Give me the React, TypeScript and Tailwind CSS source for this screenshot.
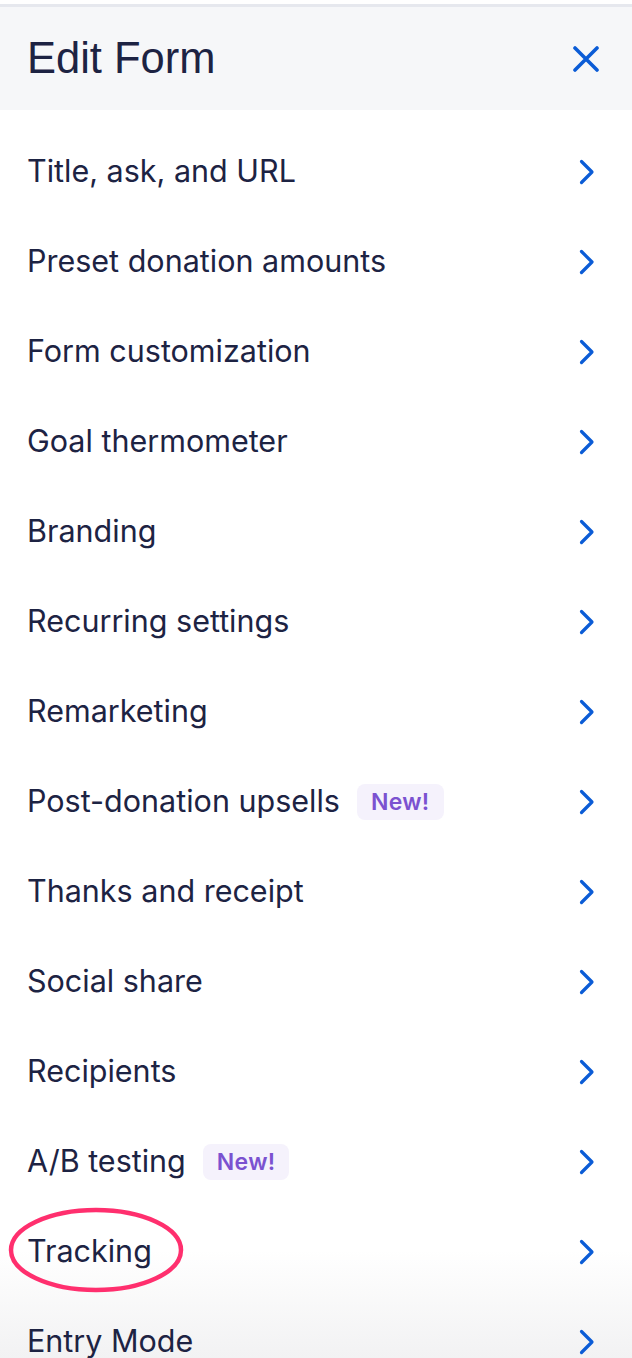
import React from 'react';

const items: { label: string; isNew?: boolean; circled?: boolean }[] = [
  { label: 'Title, ask, and URL' },
  { label: 'Preset donation amounts' },
  { label: 'Form customization' },
  { label: 'Goal thermometer' },
  { label: 'Branding' },
  { label: 'Recurring settings' },
  { label: 'Remarketing' },
  { label: 'Post-donation upsells', isNew: true },
  { label: 'Thanks and receipt' },
  { label: 'Social share' },
  { label: 'Recipients' },
  { label: 'A/B testing', isNew: true },
  { label: 'Tracking', circled: true },
  { label: 'Entry Mode' },
];

function Chevron() {
  return (
    <svg width="16" height="26" viewBox="0 0 16 26" fill="none" className="shrink-0">
      <path d="M2.5 2.5 L13 13 L2.5 23.5" stroke="#0b5cd6" strokeWidth="3.2" strokeLinecap="round" strokeLinejoin="round" />
    </svg>
  );
}

export default function App() {
  return (
    <div className="relative w-[632px] h-[1358px] overflow-hidden bg-[linear-gradient(to_bottom,#ffffff_1250px,#f2f2f3_1358px)]">
      <div className="h-1 bg-white" />
      <div className="h-[3px] bg-[#e6e8ee]" />
      {/* Header */}
      <div className="h-[103px] bg-[#f6f7f9] flex items-center justify-between pl-[27px] pr-[33px]">
        <h1 className="text-[43.5px] leading-none text-[#1d2343] font-['Liberation_Sans',Arial,sans-serif] pt-[1px]">
          Edit Form
        </h1>
        <svg width="26" height="26" viewBox="0 0 26 26" fill="none">
          <path d="M2 2 L24 24 M24 2 L2 24" stroke="#0b5cd6" strokeWidth="3.6" strokeLinecap="round" />
        </svg>
      </div>

      {/* List */}
      <ul className="pt-[17px] flex flex-col font-['Inter',sans-serif] text-[#1d2343]">
        {items.map((it) => (
          <li key={it.label} className="relative h-[90px] flex items-center justify-between pl-[27px] pr-[37px]">
            {it.circled && (
              <svg
                className="absolute left-[8px] top-0 pointer-events-none"
                width="178"
                height="90"
                viewBox="0 0 178 90"
                fill="none"
              >
                <ellipse cx="88" cy="43" rx="85" ry="40" stroke="#ff2f6e" strokeWidth="4.5" />
              </svg>
            )}
            <div className="flex items-center gap-[17px]">
              <span className="text-[30.5px] leading-none pb-[1px]">{it.label}</span>
              {it.isNew && (
                <span className="rounded-lg bg-[#f5f2fc] px-[14px] h-9 flex items-center text-[23px] font-semibold text-[#7b52d0] tracking-[0.3px]">
                  New!
                </span>
              )}
            </div>
            <Chevron />
          </li>
        ))}
      </ul>
    </div>
  );
}
